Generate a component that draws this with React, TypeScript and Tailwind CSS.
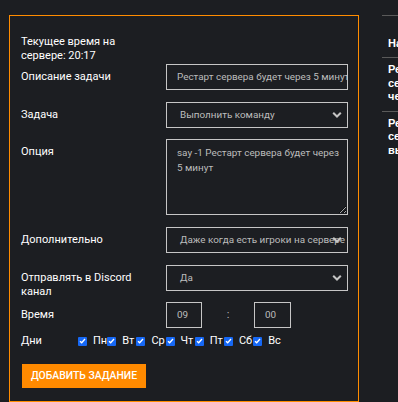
import { ReactNode } from 'react';

const days = ["Пн", "Вт", "Ср", "Чт", "Пт", "Сб", "Вс"];

function Chevron() {
  return (
    <svg width="10" height="7" viewBox="0 0 10 7" className="absolute right-[5px] top-1/2 -translate-y-1/2">
      <path d="M1.2 1.2 L5 5 L8.8 1.2" fill="none" stroke="#c4c4c4" strokeWidth="2" />
    </svg>
  );
}

function Row({ label, children, className = "" }: { label: ReactNode; children: ReactNode; className?: string }) {
  return (
    <div className={`flex items-start ${className}`}>
      <div className="w-[145px] h-[26px] shrink-0 pr-[20px] pt-[6px] leading-[14px]">{label}</div>
      <div className="flex-1 min-w-0">{children}</div>
    </div>
  );
}

function Field({ text, select = false, pl = "pl-[10px]" }: { text: string; select?: boolean; pl?: string }) {
  return (
    <div className="relative h-[26px] border border-[#c6c6c6] text-[#bdbdbd] text-[9.9px]">
      <div className={`h-full flex items-center overflow-hidden whitespace-nowrap ${pl} ${select ? "pr-[22px]" : "pr-[8px]"}`}>
        {text}
      </div>
      {select && <Chevron />}
    </div>
  );
}

function Check() {
  return (
    <span className="w-[9px] h-[9px] shrink-0 bg-[#1668f5] rounded-[1px] flex items-center justify-center">
      <svg width="7" height="6" viewBox="0 0 7 6">
        <path d="M1 3.2 L2.7 4.8 L6 1" fill="none" stroke="white" strokeWidth="1.3" />
      </svg>
    </span>
  );
}

export default function App() {
  return (
    <div className="w-[398px] h-[402px] overflow-hidden bg-[#1c1e22] text-white text-[11px] font-['Roboto',sans-serif] flex pl-[9px] pt-[15px]">
      <div className="w-[350px] h-[387px] shrink-0 border border-[#ff8c00] pl-[11px] pr-[10px] pt-[19px]">
        <div className="w-[125px] leading-[14px]">Текущее время на сервере: 20:17</div>

        <Row label="Описание задачи" className="mt-[1px] mb-[12px]">
          <Field text="Рестарт сервера будет через 5 минут" />
        </Row>

        <Row label="Задача" className="mb-[11px]">
          <Field text="Выполнить команду" select pl="pl-[13px]" />
        </Row>

        <Row label="Опция" className="mb-[12px]">
          <textarea
            readOnly
            defaultValue="say -1 Рестарт сервера будет через 5 минут"
            className="block w-full h-[76px] bg-transparent border border-[#c6c6c6] text-[#bdbdbd] text-[9.9px] pl-[10px] pr-[4px] pt-[5px] leading-[15px] outline-none resize-y"
          />
        </Row>

        <Row label="Дополнительно" className="mb-[12px]">
          <Field text="Даже когда есть игроки на сервере" select pl="pl-[13px]" />
        </Row>

        <Row label="Отправлять в Discord канал" className="mb-[11px]">
          <Field text="Да" select pl="pl-[13px]" />
        </Row>

        <Row label="Время">
          <div className="flex items-center">
            <div className="w-[36px]">
              <Field text="09" />
            </div>
            <div className="w-[52px] text-center text-[#bdbdbd]">:</div>
            <div className="w-[37px]">
              <Field text="00" />
            </div>
          </div>
        </Row>

        <div className="flex items-center mt-[6px] leading-[14px]">
          <div className="w-[57px] shrink-0">Дни</div>
          {days.map((d, i) => (
            <div key={d} className={`flex items-center ${i < days.length - 1 ? "w-[29.2px]" : ""}`}>
              <Check />
              <span className="ml-[6px]">{d}</span>
            </div>
          ))}
        </div>

        <button className="mt-[16px] ml-[1px] w-[124px] h-[24px] bg-[#ff8a00] text-white font-medium uppercase text-[10.4px] flex items-center justify-center">
          Добавить задание
        </button>
      </div>

      <div className="ml-[23px] w-[160px] shrink-0 border-t border-[#5a5a5a] text-[11px] font-bold font-['Liberation_Sans',sans-serif]">
        <div className="pl-[6px] pt-[20px] pb-[7px] leading-[14px] border-b border-[#5a5a5a]">Название</div>
        <div className="pl-[6px] pt-[5px] pb-[7px] leading-[13.5px] border-b border-[#5a5a5a]">
          <div className="w-[65px]">Рестарт сервера через 5 мин</div>
        </div>
        <div className="pl-[6px] pt-[5px] pb-[7px] leading-[13.5px]">
          <div className="w-[65px]">Рестарт сервера выполнен</div>
        </div>
      </div>
    </div>
  );
}
